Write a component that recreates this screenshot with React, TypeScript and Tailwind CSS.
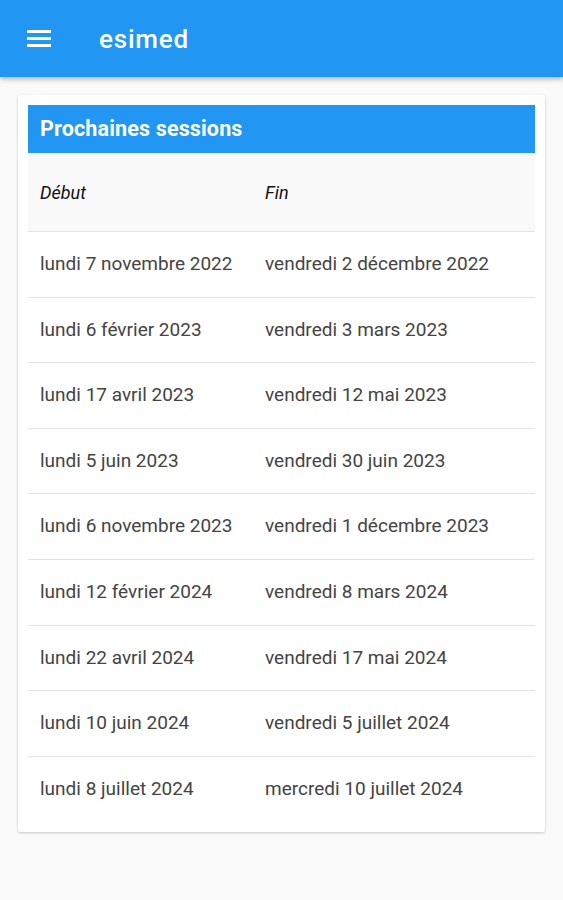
import React from "react";

const rows: [string, string][] = [
  ["lundi 7 novembre 2022", "vendredi 2 décembre 2022"],
  ["lundi 6 février 2023", "vendredi 3 mars 2023"],
  ["lundi 17 avril 2023", "vendredi 12 mai 2023"],
  ["lundi 5 juin 2023", "vendredi 30 juin 2023"],
  ["lundi 6 novembre 2023", "vendredi 1 décembre 2023"],
  ["lundi 12 février 2024", "vendredi 8 mars 2024"],
  ["lundi 22 avril 2024", "vendredi 17 mai 2024"],
  ["lundi 10 juin 2024", "vendredi 5 juillet 2024"],
  ["lundi 8 juillet 2024", "mercredi 10 juillet 2024"],
];

export default function App() {
  return (
    <div className="min-h-[900px] bg-[#fafafa]" style={{ fontFamily: "Roboto, 'Noto Sans', sans-serif" }}>
      <header className="h-[77px] bg-[#2196f3] flex items-center shadow-[0_2px_5px_rgba(0,0,0,0.3)] relative z-10">
        <div className="w-[24px] ml-[27px] flex flex-col gap-[4px]">
          <div className="h-[3px] bg-white" />
          <div className="h-[3px] bg-white" />
          <div className="h-[3px] bg-white" />
        </div>
        <div className="ml-[48px] text-white text-[26px] tracking-[0.8px] font-medium leading-none">esimed</div>
      </header>
      <div className="px-[18px] pt-[18px]">
        <div className="bg-white p-[10px] rounded-[2px] shadow-[0_1px_3px_rgba(0,0,0,0.2)]">
          <div className="h-[48px] bg-[#2196f3] flex items-center pl-[12px] text-white text-[21.5px] tracking-[0.15px] font-bold">
            Prochaines sessions
          </div>
          <div className="h-[79px] bg-[#f9f9f9] grid grid-cols-[225px_1fr] items-center text-[18px] italic text-[#111] border-b border-[#e4e4e4]">
            <div className="pl-[12px]">Début</div>
            <div className="pl-[12px]">Fin</div>
          </div>
          {rows.map(([a, b], i) => (
            <div
              key={i}
              className={`h-[65.6px] grid grid-cols-[225px_1fr] items-center text-[19px] text-[#444] ${i < rows.length - 1 ? "border-b border-[#e4e4e4]" : ""}`}
            >
              <div className="pl-[12px]">{a}</div>
              <div className="pl-[12px]">{b}</div>
            </div>
          ))}
        </div>
      </div>
    </div>
  );
}
